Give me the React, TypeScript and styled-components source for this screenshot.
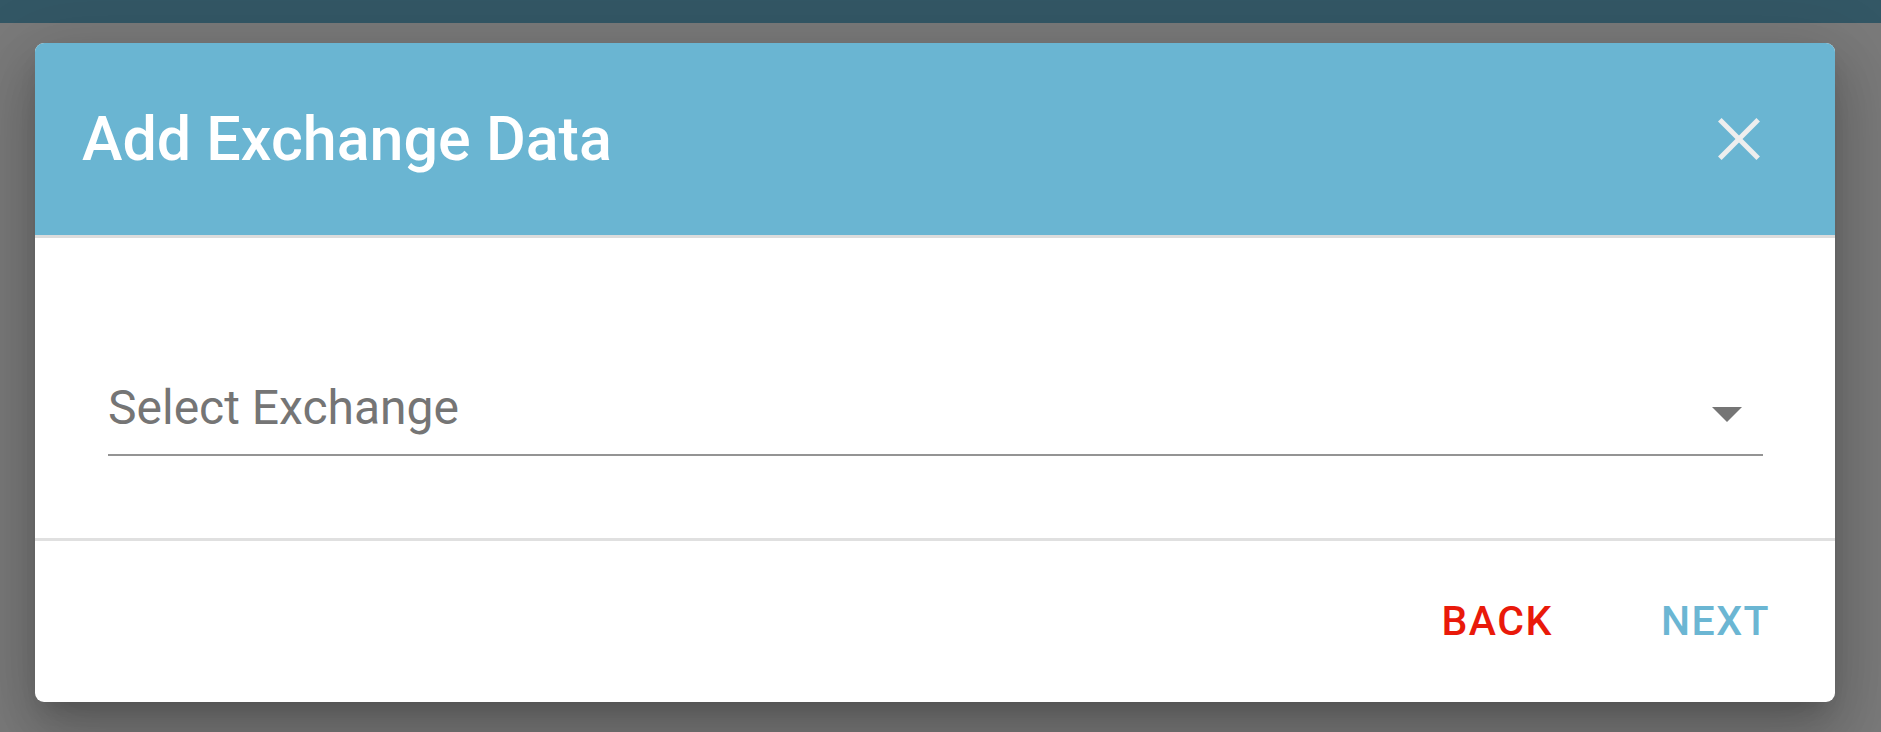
import React from 'react'
import styled, { createGlobalStyle } from 'styled-components'

const Global = createGlobalStyle`
  html, body {
    margin: 0;
    padding: 0;
    height: 100%;
    overflow: hidden;
    font-family: Roboto, "Liberation Sans", Arial, sans-serif;
  }
  #root {
    height: 100%;
  }
`

const App = () => {
  return (
    <Page>
      <Global />
      <AppBar />
      <Overlay>
        <Dialog role="dialog">
          <Header>
            <Title>Add Exchange Data</Title>
            <Close aria-label="close">
              <svg width="42" height="42" viewBox="0 0 42 42" overflow="visible">
                <line x1="1.8" y1="1.8" x2="40.2" y2="40.2" stroke="#eeeeee" strokeWidth="5" />
                <line x1="40.2" y1="1.8" x2="1.8" y2="40.2" stroke="#eeeeee" strokeWidth="5" />
              </svg>
            </Close>
          </Header>
          <Content>
            <Field>
              <Placeholder>Select Exchange</Placeholder>
              <Arrow />
            </Field>
          </Content>
          <Footer>
            <TextButton color="#e9190a">BACK</TextButton>
            <TextButton color="#6bb6d3">NEXT</TextButton>
          </Footer>
        </Dialog>
      </Overlay>
    </Page>
  )
}

export default App

const Page = styled.div`
  height: 100%;
  display: flex;
  flex-direction: column;
  background: #787878;
`
const AppBar = styled.div`
  height: 23px;
  flex-shrink: 0;
  background: #335765;
`
const Overlay = styled.div`
  flex: 1;
  padding: 20px 46px 0 35px;
  background: #7a7a7a;
`
const Dialog = styled.div`
  height: 659px;
  background: #fff;
  border-radius: 9px;
  overflow: hidden;
  display: flex;
  flex-direction: column;
  box-shadow: 0 12px 22px -10px rgba(0, 0, 0, 0.2),
    0 36px 57px 4px rgba(0, 0, 0, 0.14),
    0 14px 69px 12px rgba(0, 0, 0, 0.12);
`
const Header = styled.div`
  height: 192px;
  flex-shrink: 0;
  background: #6ab5d2;
  border-bottom: 3px solid #dcdcdc;
  display: flex;
  align-items: center;
  justify-content: space-between;
  padding: 0 75px 0 47px;
`
const Title = styled.h2`
  margin: 0;
  color: #fff;
  font-size: 61px;
  font-weight: 500;
  line-height: 1;
`
const Close = styled.button`
  border: 0;
  background: none;
  padding: 0;
  width: 42px;
  height: 42px;
  display: flex;
`
const Content = styled.div`
  height: 303px;
  box-sizing: border-box;
  padding: 142px 72px 0 73px;
  border-bottom: 3px solid #e0e0e0;
`
const Field = styled.div`
  display: flex;
  align-items: center;
  justify-content: space-between;
  padding-bottom: 18px;
  border-bottom: 2px solid #949494;
`
const Placeholder = styled.span`
  font-size: 48px;
  line-height: 56px;
  color: #757575;
`
const Arrow = styled.div`
  width: 0;
  height: 0;
  margin: 12px 21px 0 0;
  border-left: 15px solid transparent;
  border-right: 15px solid transparent;
  border-top: 15px solid #757575;
`
const Footer = styled.div`
  flex: 1;
  display: flex;
  align-items: center;
  justify-content: flex-end;
  gap: 108px;
  padding: 0 65px 0 0;
`
const TextButton = styled.button<{ color: string }>`
  border: 0;
  background: none;
  padding: 0;
  font-family: Roboto, "Liberation Sans", Arial, sans-serif;
  font-size: 41px;
  font-weight: 500;
  letter-spacing: 1.5px;
  line-height: 1;
  color: ${p => p.color};
`
